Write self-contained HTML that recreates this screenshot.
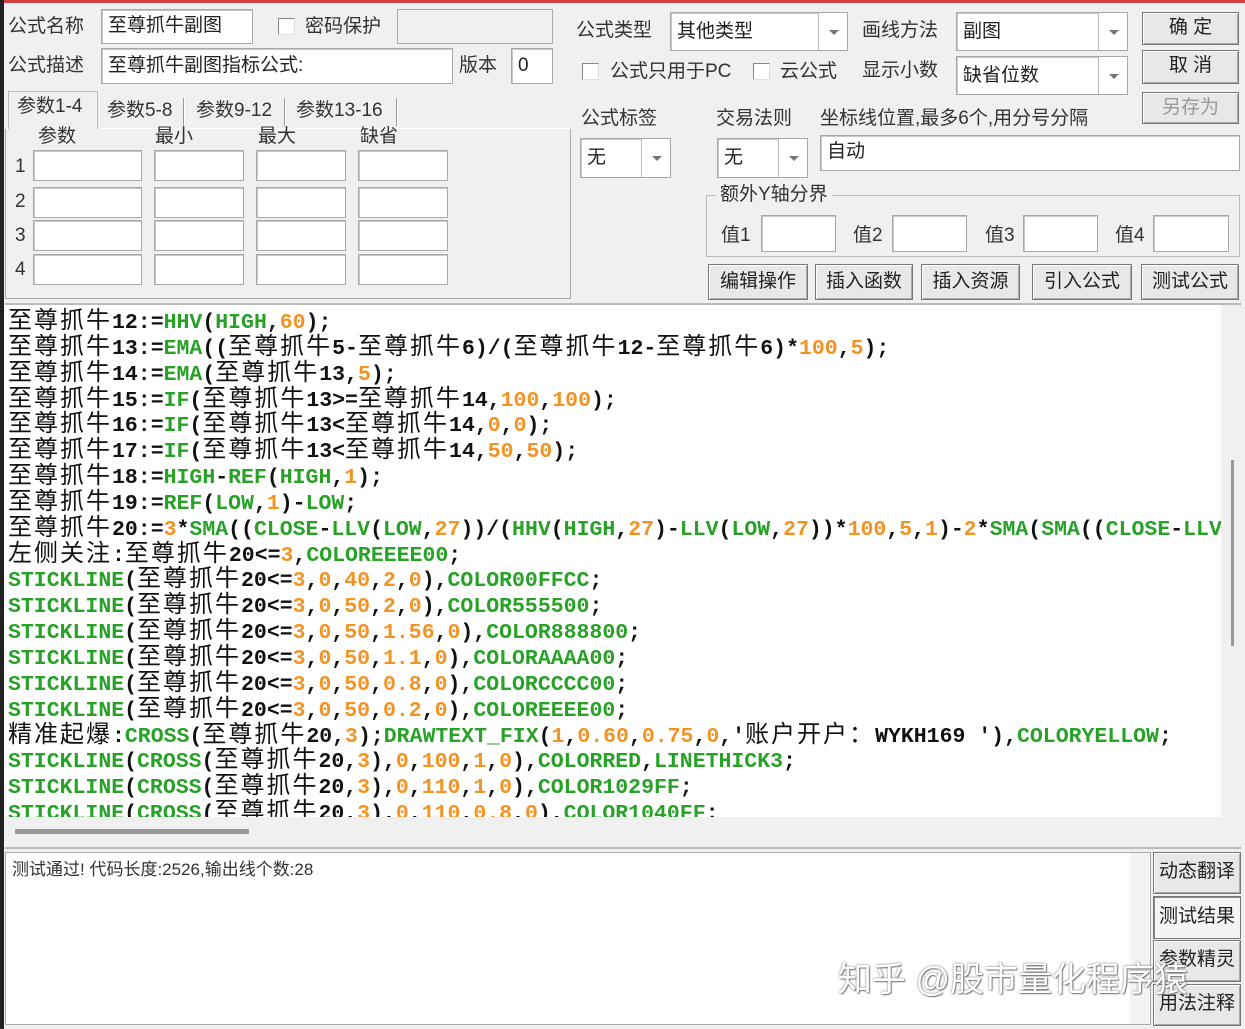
<!DOCTYPE html>
<html><head><meta charset="utf-8">
<style>
*{box-sizing:border-box;margin:0;padding:0}
body{width:1245px;height:1029px;background:#f0f0f0;position:relative;overflow:hidden;font-family:"Liberation Sans","Noto Sans CJK SC",sans-serif;font-size:19px;color:#222}
.a{position:absolute}
.lbl{position:absolute;font-size:19px;line-height:22px;white-space:nowrap;color:#333}
.in{position:absolute;background:#fff;border:1px solid #a8a8a8;box-shadow:inset 1px 1px 0 #c8c8c8;font-size:19px;padding:6px 6px;white-space:nowrap;line-height:22px}
.cb{position:absolute;width:17px;height:17px;background:#fff;border:1px solid #888;border-right-color:#ddd;border-bottom-color:#ddd}
.arr{position:absolute;right:0;top:0;bottom:0;width:29px;border-left:1px solid #bbb;background:#fff}
.arr:after{content:"";position:absolute;left:10px;top:50%;margin-top:-2px;border-left:5px solid transparent;border-right:5px solid transparent;border-top:5px solid #777}
.btn{position:absolute;background:#e8e8e8;border:1px solid #777;box-shadow:inset 1px 1px 0 #fff,inset -1px -1px 0 #aaa;text-align:center;font-size:19px;line-height:30px;color:#222}
.code{position:absolute;left:5px;top:305px;width:1216px;height:512px;background:#fff;overflow:hidden}
.ln{height:25.85px;line-height:25.85px;white-space:nowrap;font-family:"Liberation Mono",monospace;font-weight:bold;font-size:21.5px;padding-left:3px;color:#111}
.c{font-family:"Noto Sans CJK SC",sans-serif;font-weight:normal;font-size:24px;letter-spacing:2px}
.g{color:#27a227}.o{color:#f39322}
.tab{position:absolute;top:98px;font-size:19px;line-height:22px;white-space:nowrap;color:#333}
.sep{position:absolute;top:96px;width:2px;height:28px;border-left:1px solid #999;border-right:1px solid #fff}
</style></head><body>
<div class="a" style="left:0;top:0;width:1245px;height:3px;background:#d24040"></div>
<div class="a" style="left:0;top:0;width:4px;height:1029px;background:#222"></div>

<div class="lbl" style="left:8px;top:16px">公式名称</div>
<div class="in" style="left:101px;top:9px;width:152px;height:35px;padding-top:5px">至尊抓牛副图</div>
<div class="cb" style="left:278px;top:18px"></div>
<div class="lbl" style="left:305px;top:16px">密码保护</div>
<div class="a" style="left:397px;top:9px;width:156px;height:35px;border:1px solid #aaa;background:#f0f0f0"></div>
<div class="lbl" style="left:8px;top:55px">公式描述</div>
<div class="in" style="left:101px;top:48px;width:352px;height:36px;padding-top:6px">至尊抓牛副图指标公式:</div>
<div class="lbl" style="left:459px;top:55px">版本</div>
<div class="in" style="left:511px;top:48px;width:42px;height:36px;padding-top:6px">0</div>

<div class="a" style="left:5px;top:128px;width:566px;height:171px;border:1px solid #aaa;border-top-color:#fff"></div>
<div class="a" style="left:8px;top:91px;width:90px;height:38px;border:1px solid #bbb;border-bottom:none;background:#f0f0f0"></div>
<div class="tab" style="left:17px;top:96px">参数1-4</div>
<div class="tab" style="left:107px;top:100px">参数5-8</div>
<div class="sep" style="left:183px;top:98px"></div>
<div class="tab" style="left:196px;top:100px">参数9-12</div>
<div class="sep" style="left:284px;top:98px"></div>
<div class="tab" style="left:296px;top:100px">参数13-16</div>
<div class="sep" style="left:396px;top:98px"></div>
<div class="lbl" style="left:38px;top:126px">参数</div>
<div class="lbl" style="left:155px;top:126px">最小</div>
<div class="lbl" style="left:258px;top:126px">最大</div>
<div class="lbl" style="left:360px;top:126px">缺省</div>
<div class="lbl" style="left:15px;top:156px">1</div><div class="lbl" style="left:15px;top:191px">2</div><div class="lbl" style="left:15px;top:225px">3</div><div class="lbl" style="left:15px;top:259px">4</div>
<div class="in" style="left:33px;top:150px;width:109px;height:31px"></div><div class="in" style="left:154px;top:150px;width:90px;height:31px"></div><div class="in" style="left:256px;top:150px;width:90px;height:31px"></div><div class="in" style="left:358px;top:150px;width:90px;height:31px"></div>
<div class="in" style="left:33px;top:187px;width:109px;height:31px"></div><div class="in" style="left:154px;top:187px;width:90px;height:31px"></div><div class="in" style="left:256px;top:187px;width:90px;height:31px"></div><div class="in" style="left:358px;top:187px;width:90px;height:31px"></div>
<div class="in" style="left:33px;top:220px;width:109px;height:31px"></div><div class="in" style="left:154px;top:220px;width:90px;height:31px"></div><div class="in" style="left:256px;top:220px;width:90px;height:31px"></div><div class="in" style="left:358px;top:220px;width:90px;height:31px"></div>
<div class="in" style="left:33px;top:254px;width:109px;height:31px"></div><div class="in" style="left:154px;top:254px;width:90px;height:31px"></div><div class="in" style="left:256px;top:254px;width:90px;height:31px"></div><div class="in" style="left:358px;top:254px;width:90px;height:31px"></div>

<div class="lbl" style="left:576px;top:20px">公式类型</div>
<div class="in" style="left:670px;top:12px;width:178px;height:39px;padding-top:8px">其他类型<div class="arr"></div></div>
<div class="lbl" style="left:862px;top:20px">画线方法</div>
<div class="in" style="left:956px;top:12px;width:172px;height:39px;padding-top:8px">副图<div class="arr"></div></div>
<div class="btn" style="left:1142px;top:12px;width:97px;height:33px">确 定</div>
<div class="btn" style="left:1142px;top:50px;width:97px;height:34px">取 消</div>
<div class="btn" style="left:1142px;top:92px;width:97px;height:32px;color:#999">另存为</div>
<div class="cb" style="left:582px;top:63px"></div>
<div class="lbl" style="left:610px;top:61px">公式只用于PC</div>
<div class="cb" style="left:753px;top:63px"></div>
<div class="lbl" style="left:780px;top:61px">云公式</div>
<div class="lbl" style="left:862px;top:60px">显示小数</div>
<div class="in" style="left:956px;top:56px;width:172px;height:39px;padding-top:8px">缺省位数<div class="arr"></div></div>
<div class="lbl" style="left:581px;top:108px">公式标签</div>
<div class="lbl" style="left:716px;top:108px">交易法则</div>
<div class="lbl" style="left:820px;top:108px">坐标线位置,最多6个,用分号分隔</div>
<div class="in" style="left:580px;top:138px;width:91px;height:40px;padding-top:8px">无<div class="arr"></div></div>
<div class="in" style="left:717px;top:138px;width:91px;height:40px;padding-top:8px">无<div class="arr"></div></div>
<div class="in" style="left:820px;top:135px;width:420px;height:36px;padding-top:5px">自动</div>
<div class="a" style="left:706px;top:195px;width:534px;height:62px;border:1px solid #bbb"></div>
<div class="lbl" style="left:716px;top:184px;background:#f0f0f0;padding:0 4px">额外Y轴分界</div>
<div class="lbl" style="left:721px;top:225px">值1</div><div class="in" style="left:761px;top:215px;width:75px;height:37px"></div>
<div class="lbl" style="left:853px;top:225px">值2</div><div class="in" style="left:892px;top:215px;width:75px;height:37px"></div>
<div class="lbl" style="left:985px;top:225px">值3</div><div class="in" style="left:1023px;top:215px;width:75px;height:37px"></div>
<div class="lbl" style="left:1115px;top:225px">值4</div><div class="in" style="left:1153px;top:215px;width:76px;height:37px"></div>
<div class="btn" style="left:708px;top:264px;width:100px;height:36px;line-height:34px">编辑操作</div>
<div class="btn" style="left:815px;top:264px;width:98px;height:36px;line-height:34px">插入函数</div>
<div class="btn" style="left:921px;top:264px;width:99px;height:36px;line-height:34px">插入资源</div>
<div class="btn" style="left:1032px;top:264px;width:100px;height:36px;line-height:34px">引入公式</div>
<div class="btn" style="left:1141px;top:264px;width:98px;height:36px;line-height:34px">测试公式</div>

<div class="a" style="left:5px;top:303px;width:1236px;height:2px;background:#bbb"></div>
<div class="code">
<div class="ln"><span class="c">至尊抓牛</span>12:=<span class="g">HHV</span>(<span class="g">HIGH</span>,<span class="o">60</span>);</div>
<div class="ln"><span class="c">至尊抓牛</span>13:=<span class="g">EMA</span>((<span class="c">至尊抓牛</span>5-<span class="c">至尊抓牛</span>6)/(<span class="c">至尊抓牛</span>12-<span class="c">至尊抓牛</span>6)*<span class="o">100</span>,<span class="o">5</span>);</div>
<div class="ln"><span class="c">至尊抓牛</span>14:=<span class="g">EMA</span>(<span class="c">至尊抓牛</span>13,<span class="o">5</span>);</div>
<div class="ln"><span class="c">至尊抓牛</span>15:=<span class="g">IF</span>(<span class="c">至尊抓牛</span>13&gt;=<span class="c">至尊抓牛</span>14,<span class="o">100</span>,<span class="o">100</span>);</div>
<div class="ln"><span class="c">至尊抓牛</span>16:=<span class="g">IF</span>(<span class="c">至尊抓牛</span>13&lt;<span class="c">至尊抓牛</span>14,<span class="o">0</span>,<span class="o">0</span>);</div>
<div class="ln"><span class="c">至尊抓牛</span>17:=<span class="g">IF</span>(<span class="c">至尊抓牛</span>13&lt;<span class="c">至尊抓牛</span>14,<span class="o">50</span>,<span class="o">50</span>);</div>
<div class="ln"><span class="c">至尊抓牛</span>18:=<span class="g">HIGH</span>-<span class="g">REF</span>(<span class="g">HIGH</span>,<span class="o">1</span>);</div>
<div class="ln"><span class="c">至尊抓牛</span>19:=<span class="g">REF</span>(<span class="g">LOW</span>,<span class="o">1</span>)-<span class="g">LOW</span>;</div>
<div class="ln"><span class="c">至尊抓牛</span>20:=<span class="o">3</span>*<span class="g">SMA</span>((<span class="g">CLOSE</span>-<span class="g">LLV</span>(<span class="g">LOW</span>,<span class="o">27</span>))/(<span class="g">HHV</span>(<span class="g">HIGH</span>,<span class="o">27</span>)-<span class="g">LLV</span>(<span class="g">LOW</span>,<span class="o">27</span>))*<span class="o">100</span>,<span class="o">5</span>,<span class="o">1</span>)-<span class="o">2</span>*<span class="g">SMA</span>(<span class="g">SMA</span>((<span class="g">CLOSE</span>-<span class="g">LLV</span>(<span class="g">LOW</span>,<span class="o">27</span>))</div>
<div class="ln"><span class="c">左侧关注</span>:<span class="c">至尊抓牛</span>20&lt;=<span class="o">3</span>,<span class="g">COLOREEEE00</span>;</div>
<div class="ln"><span class="g">STICKLINE</span>(<span class="c">至尊抓牛</span>20&lt;=<span class="o">3</span>,<span class="o">0</span>,<span class="o">40</span>,<span class="o">2</span>,<span class="o">0</span>),<span class="g">COLOR00FFCC</span>;</div>
<div class="ln"><span class="g">STICKLINE</span>(<span class="c">至尊抓牛</span>20&lt;=<span class="o">3</span>,<span class="o">0</span>,<span class="o">50</span>,<span class="o">2</span>,<span class="o">0</span>),<span class="g">COLOR555500</span>;</div>
<div class="ln"><span class="g">STICKLINE</span>(<span class="c">至尊抓牛</span>20&lt;=<span class="o">3</span>,<span class="o">0</span>,<span class="o">50</span>,<span class="o">1.56</span>,<span class="o">0</span>),<span class="g">COLOR888800</span>;</div>
<div class="ln"><span class="g">STICKLINE</span>(<span class="c">至尊抓牛</span>20&lt;=<span class="o">3</span>,<span class="o">0</span>,<span class="o">50</span>,<span class="o">1.1</span>,<span class="o">0</span>),<span class="g">COLORAAAA00</span>;</div>
<div class="ln"><span class="g">STICKLINE</span>(<span class="c">至尊抓牛</span>20&lt;=<span class="o">3</span>,<span class="o">0</span>,<span class="o">50</span>,<span class="o">0.8</span>,<span class="o">0</span>),<span class="g">COLORCCCC00</span>;</div>
<div class="ln"><span class="g">STICKLINE</span>(<span class="c">至尊抓牛</span>20&lt;=<span class="o">3</span>,<span class="o">0</span>,<span class="o">50</span>,<span class="o">0.2</span>,<span class="o">0</span>),<span class="g">COLOREEEE00</span>;</div>
<div class="ln"><span class="c">精准起爆</span>:<span class="g">CROSS</span>(<span class="c">至尊抓牛</span>20,<span class="o">3</span>);<span class="g">DRAWTEXT_FIX</span>(<span class="o">1</span>,<span class="o">0.60</span>,<span class="o">0.75</span>,<span class="o">0</span>,'<span class="c">账户开户：</span>WYKH169 '),<span class="g">COLORYELLOW</span>;</div>
<div class="ln"><span class="g">STICKLINE</span>(<span class="g">CROSS</span>(<span class="c">至尊抓牛</span>20,<span class="o">3</span>),<span class="o">0</span>,<span class="o">100</span>,<span class="o">1</span>,<span class="o">0</span>),<span class="g">COLORRED</span>,<span class="g">LINETHICK3</span>;</div>
<div class="ln"><span class="g">STICKLINE</span>(<span class="g">CROSS</span>(<span class="c">至尊抓牛</span>20,<span class="o">3</span>),<span class="o">0</span>,<span class="o">110</span>,<span class="o">1</span>,<span class="o">0</span>),<span class="g">COLOR1029FF</span>;</div>
<div class="ln"><span class="g">STICKLINE</span>(<span class="g">CROSS</span>(<span class="c">至尊抓牛</span>20,<span class="o">3</span>),<span class="o">0</span>,<span class="o">110</span>,<span class="o">0.8</span>,<span class="o">0</span>),<span class="g">COLOR1040FF</span>;</div>
</div>
<div class="a" style="left:1231px;top:460px;width:3px;height:186px;background:#999"></div>
<div class="a" style="left:15px;top:829px;width:234px;height:5px;background:#999"></div>
<div class="a" style="left:5px;top:847px;width:1236px;height:2px;background:#bbb"></div>

<div class="a" style="left:5px;top:852px;width:1146px;height:173px;background:#fff;border:1px solid #aaa"></div>
<div class="a" style="left:1130px;top:853px;width:20px;height:171px;background:#f4f4f4"></div>
<div class="lbl" style="left:12px;top:859px;font-size:17px">测试通过! 代码长度:2526,输出线个数:28</div>
<div class="btn" style="left:1153px;top:852px;width:88px;height:42px;line-height:38px">动态翻译</div>
<div class="btn" style="left:1153px;top:896px;width:88px;height:43px;line-height:40px;background:#f4f4f4;box-shadow:inset 1px 1px 0 #888">测试结果</div>
<div class="btn" style="left:1153px;top:940px;width:88px;height:42px;line-height:38px">参数精灵</div>
<div class="btn" style="left:1153px;top:984px;width:88px;height:42px;line-height:38px">用法注释</div>
<div class="lbl" style="left:838px;top:960px;font-size:34px;line-height:40px;color:#fff;text-shadow:0 0 2px #666,1px 1px 1px #888">知乎 @股市量化程序猿</div>
</body></html>
